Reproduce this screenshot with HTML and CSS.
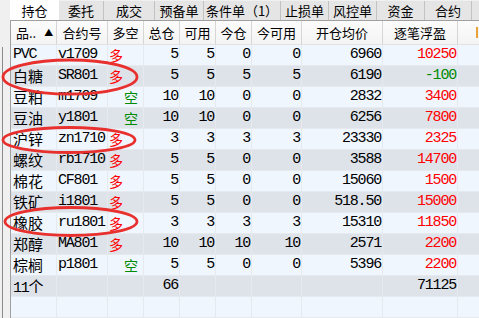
FILE: index.html
```html
<!DOCTYPE html>
<html lang="zh">
<head>
<meta charset="utf-8">
<title>持仓</title>
<link rel="stylesheet" href="styles.css">
</head>
<body>
<div class="window">
  <div class="side"></div>
  <div class="main">
    <div class="tabs">
      <div class="tab active">持仓</div>
      <div class="tab">委托</div>
      <div class="tab">成交</div>
      <div class="tab">预备单</div>
      <div class="tab">条件单（1）</div>
      <div class="tab">止损单</div>
      <div class="tab">风控单</div>
      <div class="tab">资金</div>
      <div class="tab">合约</div>
      <div class="tab"></div>
    </div>
    <div class="frame">
      <div class="row head">
        <div class="c first">品.. <span class="tri">▲</span></div>
        <div class="c">合约号</div>
        <div class="c">多空</div>
        <div class="c">总仓</div>
        <div class="c">可用</div>
        <div class="c">今仓</div>
        <div class="c">今可用</div>
        <div class="c">开仓均价</div>
        <div class="c">逐笔浮盈</div>
        <div class="c extra"><span class="mark"></span></div>
      </div>

      <div class="row light">
        <div class="c name num">PVC</div><div class="c code num">v1709</div><div class="c dir long">多</div>
        <div class="c n">5</div><div class="c n">5</div><div class="c n">0</div><div class="c n">0</div><div class="c n">6960</div><div class="c n up">10250</div><div class="c"></div>
      </div>
      <div class="row dark">
        <div class="c name">白糖</div><div class="c code num">SR801</div><div class="c dir long">多</div>
        <div class="c n">5</div><div class="c n">5</div><div class="c n">5</div><div class="c n">5</div><div class="c n">6190</div><div class="c n down">-100</div><div class="c"></div>
      </div>
      <div class="row light">
        <div class="c name">豆粕</div><div class="c code num">m1709</div><div class="c dir short">空</div>
        <div class="c n">10</div><div class="c n">10</div><div class="c n">0</div><div class="c n">0</div><div class="c n">2832</div><div class="c n up">3400</div><div class="c"></div>
      </div>
      <div class="row dark">
        <div class="c name">豆油</div><div class="c code num">y1801</div><div class="c dir short">空</div>
        <div class="c n">10</div><div class="c n">10</div><div class="c n">0</div><div class="c n">0</div><div class="c n">6256</div><div class="c n up">7800</div><div class="c"></div>
      </div>
      <div class="row light">
        <div class="c name">沪锌</div><div class="c code num">zn1710</div><div class="c dir long">多</div>
        <div class="c n">3</div><div class="c n">3</div><div class="c n">3</div><div class="c n">3</div><div class="c n">23330</div><div class="c n up">2325</div><div class="c"></div>
      </div>
      <div class="row dark">
        <div class="c name">螺纹</div><div class="c code num">rb1710</div><div class="c dir long">多</div>
        <div class="c n">5</div><div class="c n">5</div><div class="c n">0</div><div class="c n">0</div><div class="c n">3588</div><div class="c n up">14700</div><div class="c"></div>
      </div>
      <div class="row light">
        <div class="c name">棉花</div><div class="c code num">CF801</div><div class="c dir long">多</div>
        <div class="c n">5</div><div class="c n">5</div><div class="c n">0</div><div class="c n">0</div><div class="c n">15060</div><div class="c n up">1500</div><div class="c"></div>
      </div>
      <div class="row dark">
        <div class="c name">铁矿</div><div class="c code num">i1801</div><div class="c dir long">多</div>
        <div class="c n">5</div><div class="c n">5</div><div class="c n">0</div><div class="c n">0</div><div class="c n">518.50</div><div class="c n up">15000</div><div class="c"></div>
      </div>
      <div class="row light">
        <div class="c name">橡胶</div><div class="c code num">ru1801</div><div class="c dir long">多</div>
        <div class="c n">3</div><div class="c n">3</div><div class="c n">3</div><div class="c n">3</div><div class="c n">15310</div><div class="c n up">11850</div><div class="c"></div>
      </div>
      <div class="row dark">
        <div class="c name">郑醇</div><div class="c code num">MA801</div><div class="c dir long">多</div>
        <div class="c n">10</div><div class="c n">10</div><div class="c n">10</div><div class="c n">10</div><div class="c n">2571</div><div class="c n up">2200</div><div class="c"></div>
      </div>
      <div class="row light">
        <div class="c name">棕榈</div><div class="c code num">p1801</div><div class="c dir short">空</div>
        <div class="c n">5</div><div class="c n">5</div><div class="c n">0</div><div class="c n">0</div><div class="c n">5396</div><div class="c n up">2200</div><div class="c"></div>
      </div>
      <div class="row dark">
        <div class="c name"><span class="num">11</span>个</div><div class="c"></div><div class="c"></div>
        <div class="c n">66</div><div class="c"></div><div class="c"></div><div class="c"></div><div class="c"></div><div class="c n">71125</div><div class="c"></div>
      </div>
      <div class="row light">
        <div class="c"></div><div class="c"></div><div class="c"></div><div class="c"></div><div class="c"></div><div class="c"></div><div class="c"></div><div class="c"></div><div class="c"></div><div class="c"></div>
      </div>
    </div>
  </div>
  <svg class="marks" width="479" height="318" viewBox="0 0 479 318">
    <ellipse cx="70" cy="77" rx="67" ry="17"/>
    <ellipse cx="69" cy="140" rx="66" ry="12.5"/>
    <ellipse cx="71" cy="221.5" rx="66" ry="14"/>
  </svg>
</div>
</body>
</html>
```

FILE: styles.css
```css
html, body {
  margin: 0;
  padding: 0;
  width: 479px;
  height: 318px;
  overflow: hidden;
  background: #f0f0f0;
}

.window {
  position: relative;
  display: flex;
  width: 479px;
  height: 318px;
  overflow: hidden;
  font-family: "Noto Sans CJK SC", sans-serif;
  color: #000;
}

.side {
  flex: 0 0 8px;
  margin-left: 2px;
  margin-top: 47px;
  border-left: 1px solid #8a8a8a;
  box-sizing: border-box;
}

.main {
  flex: 0 0 auto;
  width: 600px;
  display: flex;
  flex-direction: column;
}

.tabs {
  display: flex;
  height: 22px;
  align-items: flex-end;
}

.tab {
  box-sizing: border-box;
  height: 19px;
  background: #e5e5e5;
  border-right: 1px solid #c2c2c2;
  font-size: 13px;
  line-height: 19px;
  text-align: center;
  white-space: nowrap;
  flex: 0 0 auto;
}

.tab.active {
  height: 20px;
  line-height: 21px;
  background: #fff;
  border-right: none;
}

.tab:nth-child(1) { width: 49px; }
.tab:nth-child(2) { width: 45px; }
.tab:nth-child(3) { width: 51px; }
.tab:nth-child(4) { width: 49px; }
.tab:nth-child(5) { width: 77px; }
.tab:nth-child(6) { width: 48px; }
.tab:nth-child(7) { width: 48px; }
.tab:nth-child(8) { width: 48px; }
.tab:nth-child(9) { width: 47px; }
.tab:nth-child(10) { width: 60px; }

.frame {
  border-top: 1px solid #a0a0a0;
  border-left: 1px solid #a0a0a0;
  background: #eff6fe;
  flex: 1 1 auto;
}

.row {
  display: grid;
  grid-template-columns: 46px 51px 36px 36px 36px 36px 50px 81px 75px 90px;
  height: 21px;
  box-sizing: border-box;
  border-bottom: 1px solid #e6eaef;
}

.row.light { background: #eff6fe; }
.row.dark { background: #dee3ea; }

.c {
  box-sizing: border-box;
  border-right: 1px solid #e6e9ed;
  line-height: 20px;
  font-size: 15px;
  white-space: nowrap;
  overflow: hidden;
}

.row.head {
  height: 24px;
  background: linear-gradient(#fcfcfc, #f4f4f4);
  border-bottom: 1px solid #e2e2e2;
}

.head .c {
  font-size: 13px;
  line-height: 23px;
  text-align: center;
  border-right: 1px solid #d6d6d6;
}

.head .c.first {
  text-align: left;
  padding-left: 5px;
}

.tri {
  font-size: 9px;
  margin-left: 5px;
  position: relative;
  top: -2px;
}

.head .c.extra {
  text-align: left;
  padding-left: 18px;
}

.mark {
  display: inline-block;
  width: 2px;
  height: 11px;
  margin-top: 6px;
  vertical-align: top;
  background: #e9a23a;
}

.num, .n, .code {
  font-family: "Liberation Mono", "Noto Sans CJK SC", monospace;
  font-size: 15px;
  letter-spacing: -1.2px;
}

.name {
  padding-left: 2px;
}

.code {
  padding-left: 1px;
}

.n {
  text-align: right;
  padding-right: 1px;
}

.dir {
  font-size: 14px;
}

.dir.long {
  color: #ff0000;
  padding-left: 1px;
}

.dir.short {
  color: #008a00;
  text-align: right;
  padding-right: 5px;
}

.up { color: #ff0000; }
.down { color: #008a00; }

.marks {
  position: absolute;
  left: 0;
  top: 0;
  pointer-events: none;
}

.marks ellipse {
  fill: none;
  stroke: #e8302e;
  stroke-width: 2.8;
}
```
